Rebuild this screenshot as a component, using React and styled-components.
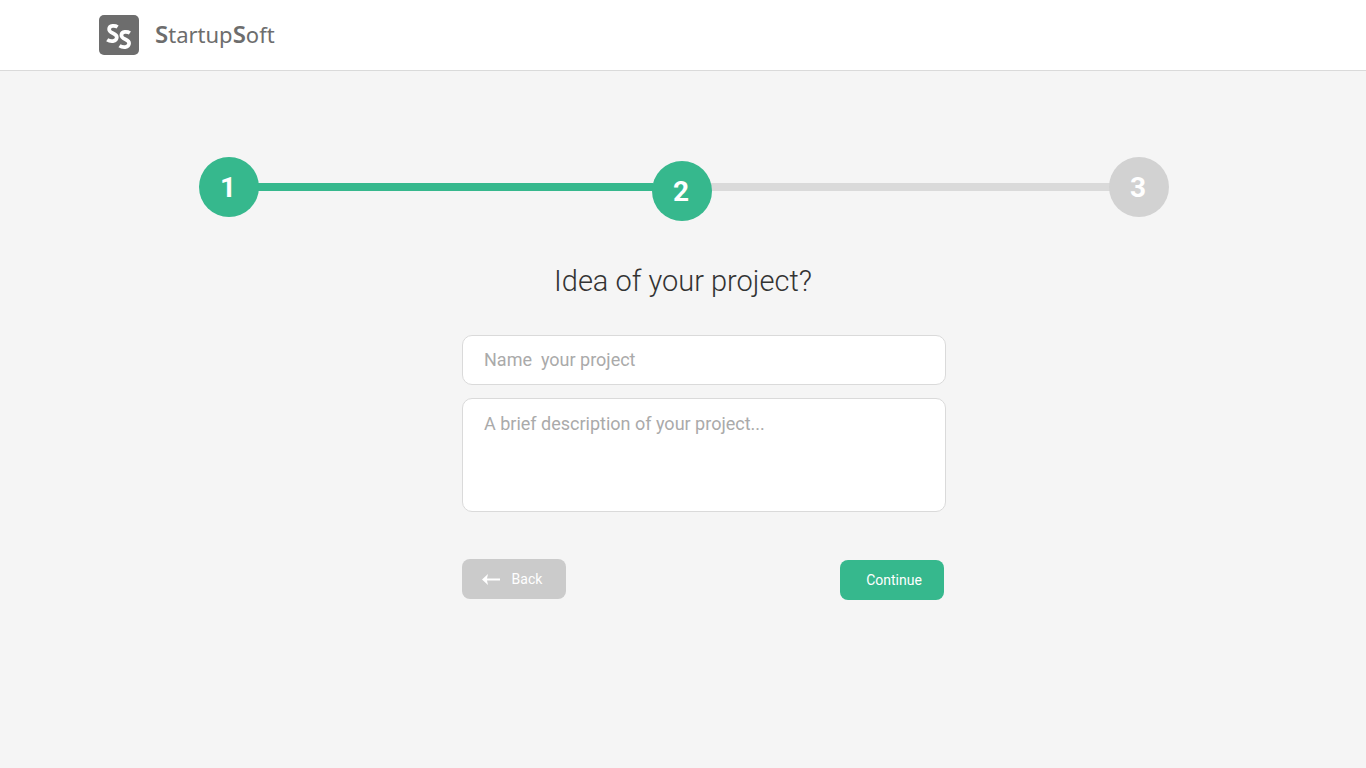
import React from "react";
import styled, { createGlobalStyle } from "styled-components";

const GREEN = "#36b88d";

const GlobalStyle = createGlobalStyle`
  *, *::before, *::after { box-sizing: border-box; }
  body {
    margin: 0;
    background: #f5f5f5;
    font-family: Roboto, "Liberation Sans", sans-serif;
  }
`;

const Header = styled.header`
  display: flex;
  align-items: center;
  height: 71px;
  padding: 0 99px;
  background: #fff;
  border-bottom: 1px solid #dadada;
`;

const Brand = styled.a`
  display: flex;
  align-items: center;
  gap: 16px;
  color: #6d6d6d;
  text-decoration: none;
`;

const LogoMark = styled.svg`
  display: block;
  width: 40px;
  height: 40px;
`;

const BrandName = styled.span`
  padding-bottom: 2px;
  font-family: "Noto Sans", "Open Sans", sans-serif;
  font-size: 22px;
  line-height: 38px;

  b {
    font-size: 24px;
    font-weight: 600;
  }
`;

const Main = styled.main`
  display: flex;
  flex-direction: column;
  align-items: center;
  padding: 86px 0 40px 2px;
`;

const Stepper = styled.ol`
  display: flex;
  align-items: flex-start;
  width: 100%;
  max-width: 970px;
  min-height: 64px;
  margin: 0;
  padding: 0;
  list-style: none;
`;

const Step = styled.li`
  position: relative;
  flex: none;
  width: 60px;
  height: 60px;
  margin-top: ${(p) => (p.$current ? "4px" : "0")};
  padding: 1px 2px 0 0;
  border-radius: 50%;
  background: ${(p) => (p.$reached ? GREEN : "#d2d2d2")};
  color: #fff;
  font-size: 28px;
  font-weight: 700;
  line-height: 60px;
  text-align: center;
`;

const Track = styled.li`
  flex: ${(p) => (p.$reached ? 99 : 100)};
  height: 8px;
  margin: 26px -1px 0;
  background: ${(p) => (p.$reached ? GREEN : "#dadada")};
`;

const Title = styled.h1`
  margin: 40px 0 0;
  padding-right: 2px;
  color: #333;
  font-size: 29px;
  font-weight: 300;
  line-height: 40px;
`;

const Form = styled.form`
  width: 100%;
  max-width: 524px;
  margin-top: 34px;
  padding-left: 40px;
`;

const fieldStyles = `
  display: block;
  width: 100%;
  border: 1px solid #dadada;
  border-radius: 10px;
  background: #fff;
  color: #555;
  font-family: inherit;
  font-size: 18px;
  line-height: 24px;
  outline: none;

  &::placeholder { color: #aaa; opacity: 1; white-space: pre; }
  &:focus { border-color: ${GREEN}; }
`;

const TextField = styled.input`
  ${fieldStyles}
  height: 50px;
  padding: 0 21px 2px;
`;

const TextArea = styled.textarea`
  ${fieldStyles}
  height: 114px;
  margin-top: 13px;
  padding: 13px 21px;
  resize: none;
`;

const Actions = styled.div`
  display: flex;
  justify-content: space-between;
  margin-top: 47px;
  padding-right: 2px;
`;

const Button = styled.button`
  display: flex;
  align-items: center;
  justify-content: center;
  gap: 12px;
  width: 104px;
  height: 40px;
  margin-top: ${(p) => (p.$primary ? "1px" : "0")};
  padding: ${(p) => (p.$primary ? "0 0 0 4px" : "0 4px 0 0")};
  border: 0;
  border-radius: 8px;
  background: ${(p) => (p.$primary ? GREEN : "#cbcbcb")};
  color: #fff;
  font-family: inherit;
  font-size: 14px;
  line-height: 20px;
  cursor: pointer;
`;

const Arrow = styled.svg`
  display: block;
  width: 18px;
  height: 12px;
`;

export default function App() {
  return (
    <>
      <GlobalStyle />
      <Header>
        <Brand href="#" aria-label="StartupSoft">
          <LogoMark viewBox="0 0 40 40" aria-hidden="true">
            <rect width="40" height="40" rx="5" fill="#6d6d6d" />
            <g fill="none" stroke="#fff" strokeWidth="3.7">
              <path d="M18.6 12C16.2 10.4 10.3 9.9 10.1 14.2C9.9 19 17.9 17.6 17.8 22.3C17.7 27.2 11 26.6 8.2 24.7" />
              <path d="M30.9 18C28.5 16.4 22.6 15.9 22.4 20.2C22.2 25 30.2 23.6 30.1 28.3C30 33.2 23.3 32.6 20.5 30.7" />
            </g>
          </LogoMark>
          <BrandName>
            <b>S</b>tartup<b>S</b>oft
          </BrandName>
        </Brand>
      </Header>
      <Main>
        <Stepper aria-label="Progress">
          <Step $reached>1</Step>
          <Track $reached aria-hidden="true" />
          <Step $reached $current aria-current="step">2</Step>
          <Track aria-hidden="true" />
          <Step>3</Step>
        </Stepper>
        <Title>Idea of your project?</Title>
        <Form onSubmit={(e) => e.preventDefault()}>
          <TextField type="text" aria-label="Project name" placeholder="Name  your project" />
          <TextArea aria-label="Project description" placeholder="A brief description of your project..." />
          <Actions>
            <Button type="button">
              <Arrow viewBox="0 0 18 12" aria-hidden="true">
                <path d="M0 6.5L6 1L5 5.5H18V7.5H5L6 12Z" fill="#fff" />
              </Arrow>
              Back
            </Button>
            <Button type="submit" $primary>Continue</Button>
          </Actions>
        </Form>
      </Main>
    </>
  );
}
